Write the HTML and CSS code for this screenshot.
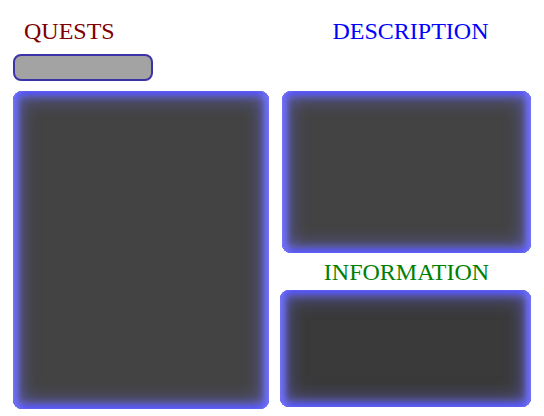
FILE: index.html
```html
<!DOCTYPE html>
<html>
<head>
<meta charset="utf-8">
<link rel="stylesheet" href="styles.css">
</head>
<body>
<div class="page">
  <div class="col left">
    <div class="title quests">QUESTS</div>
    <div class="bar"></div>
    <div class="panel quest-list"></div>
  </div>
  <div class="col right">
    <div class="title desc">DESCRIPTION</div>
    <div class="panel desc-panel"></div>
    <div class="title info">INFORMATION</div>
    <div class="panel info-panel"></div>
  </div>
</div>
</body>
</html>
```

FILE: styles.css
```css
html, body {
  margin: 0;
  padding: 0;
  background: #ffffff;
}
.page {
  display: flex;
  gap: 13px;
  padding: 0 13px 0 13px;
  font-family: "Liberation Serif", "Times New Roman", serif;
}
.col {
  display: flex;
  flex-direction: column;
}
.left {
  width: 256px;
}
.right {
  width: 249px;
}
.title {
  font-size: 24px;
  line-height: 26px;
}
.quests {
  color: #800000;
  margin: 18px 0 0 11px;
}
.bar {
  margin-top: 10px;
  width: 136px;
  height: 23px;
  background: #a3a3a3;
  border: 2px solid #3d33a8;
  border-radius: 8px;
}
.panel {
  background: #434343;
  border-radius: 9px;
  box-shadow:
    inset 4px 0 6px -2px #8a8af0,
    inset -4px 0 6px -2px #8a8af0,
    inset 2px 2px 4px 0 rgba(40, 40, 255, 0.8),
    inset -2px -2px 4px 0 rgba(40, 40, 255, 0.7),
    inset 0 0 8px 4px #6e6eff,
    inset 0 0 18px 8px rgba(110, 110, 255, 0.5);
}
.quest-list {
  margin-top: 10px;
  height: 318px;
}
.desc {
  color: #0000ff;
  text-align: center;
  padding-left: 8px;
  margin-top: 18px;
}
.desc-panel {
  margin-top: 47px;
  height: 162px;
}
.info {
  color: #008000;
  text-align: center;
  margin-top: 6px;
}
.info-panel {
  margin-top: 5px;
  margin-left: -2px;
  height: 117px;
  background: #3a3a3a;
}
```
